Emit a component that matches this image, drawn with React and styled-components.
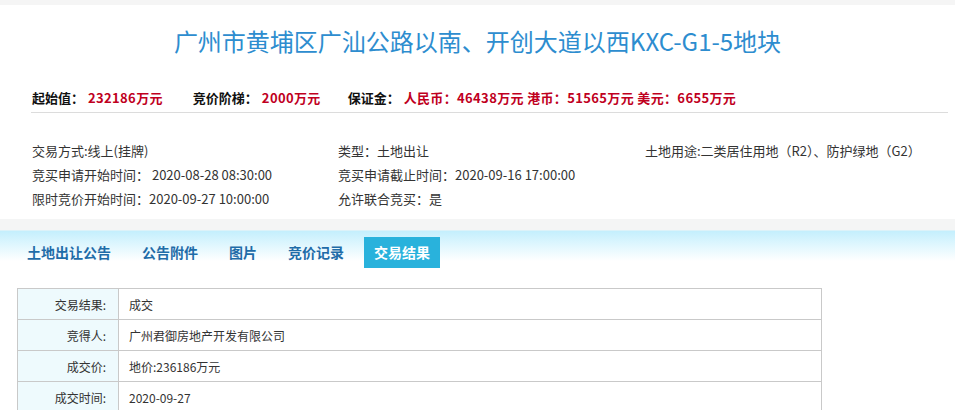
import React from 'react'
import styled, { createGlobalStyle } from 'styled-components'

const GlobalStyle = createGlobalStyle`
  html, body {
    margin: 0;
    padding: 0;
    background: #fff;
    overflow: hidden;
  }
  body {
    font-family: 'Noto Sans CJK SC', 'Liberation Sans', sans-serif;
    font-size: 12px;
    color: #333;
  }
`

const TopStrip = styled.div`
  height: 5px;
  background: #f5f5f5;
`

const Title = styled.h1`
  margin: 20px 0 0;
  height: 32px;
  line-height: 32px;
  text-align: center;
  font-size: 24px;
  font-weight: normal;
  color: #2d8dcf;
`

const PriceBar = styled.div`
  display: flex;
  align-items: center;
  margin: 30px 7px 0 31px;
  padding: 0 0 5px 1px;
  height: 20px;
  border-bottom: 1px solid #dcdcdc;
  font-size: 13px;
  font-weight: bold;
`

const PriceItem = styled.span`
  margin-right: ${({ $gap }) => $gap}px;
  color: #111;
`

const PriceValue = styled.span`
  margin-left: 4px;
  color: #c0001e;
  letter-spacing: 0.35px;
`

const InfoGrid = styled.div`
  display: grid;
  grid-template-columns: 306px 307px auto;
  grid-auto-rows: 24px;
  align-items: center;
  margin: 25px 0 0;
  padding-left: 32px;
  font-size: 13px;
  color: #333;
`

const TabBar = styled.div`
  display: flex;
  align-items: center;
  gap: 9px;
  margin-top: 9px;
  padding: 18px 0 0 16px;
  height: 31px;
  background: linear-gradient(
    to bottom,
    #f4f5f5 0,
    #f4f5f5 11px,
    #c4effd 12px,
    #ffffff 42px
  );
`

const Tab = styled.div`
  padding: 0 ${({ $active }) => ($active ? 10 : 11)}px;
  height: 31px;
  line-height: 31px;
  font-size: 14px;
  font-weight: bold;
  color: ${({ $active }) => ($active ? '#fff' : '#1f6ca8')};
  background: ${({ $active }) => ($active ? '#29b2dc' : 'transparent')};
  cursor: pointer;
`

const ResultTable = styled.table`
  margin: 20px 0 0 17px;
  width: 805px;
  border-collapse: collapse;
  font-size: 12px;
  color: #333;

  td {
    height: 30px;
    border: 1px solid #c9c9c9;
    padding: 0;
  }
`

const LabelCell = styled.td`
  width: 88px;
  padding-right: 12px !important;
  text-align: right;
  background: #eefafd;
`

const ValueCell = styled.td`
  padding-left: 10px !important;
`

const info = [
  '交易方式:线上(挂牌)',
  '类型：土地出让',
  '土地用途:二类居住用地（R2）、防护绿地（G2）',
  '竞买申请开始时间： 2020-08-28 08:30:00',
  '竞买申请截止时间：2020-09-16 17:00:00',
  '',
  '限时竞价开始时间：2020-09-27 10:00:00',
  '允许联合竞买：是',
  '',
]

const tabs = ['土地出让公告', '公告附件', '图片', '竞价记录', '交易结果']

const results = [
  ['交易结果:', '成交'],
  ['竞得人:', '广州君御房地产开发有限公司'],
  ['成交价:', '地价:236186万元'],
  ['成交时间:', '2020-09-27'],
]

const App = () => {
  return (
    <>
      <GlobalStyle />
      <TopStrip />
      <Title>广州市黄埔区广汕公路以南、开创大道以西KXC-G1-5地块</Title>
      <PriceBar>
        <PriceItem $gap={30}>
          起始值：<PriceValue>232186万元</PriceValue>
        </PriceItem>
        <PriceItem $gap={27}>
          竞价阶梯：<PriceValue>2000万元</PriceValue>
        </PriceItem>
        <PriceItem $gap={0}>
          保证金：<PriceValue>人民币：46438万元 港币：51565万元 美元：6655万元</PriceValue>
        </PriceItem>
      </PriceBar>
      <InfoGrid>
        {info.map((text, i) => (
          <span key={i}>{text}</span>
        ))}
      </InfoGrid>
      <TabBar>
        {tabs.map(tab => (
          <Tab key={tab} $active={tab === '交易结果'}>
            {tab}
          </Tab>
        ))}
      </TabBar>
      <ResultTable>
        <tbody>
          {results.map(([label, value]) => (
            <tr key={label}>
              <LabelCell>{label}</LabelCell>
              <ValueCell>{value}</ValueCell>
            </tr>
          ))}
        </tbody>
      </ResultTable>
    </>
  )
}

export default App
